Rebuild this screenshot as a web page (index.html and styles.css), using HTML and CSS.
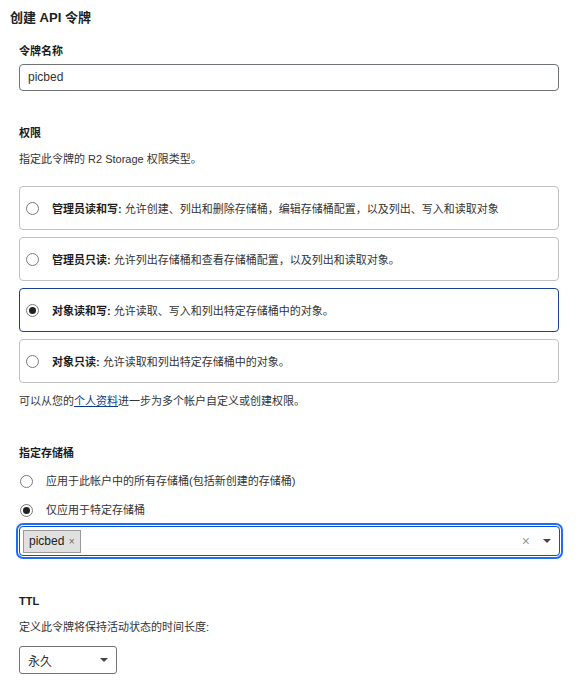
FILE: index.html
```html
<!DOCTYPE html>
<html lang="zh-CN">
<head>
    <meta charset="UTF-8">
    <title>创建 API 令牌</title>
    <link rel="stylesheet" href="styles.css">
</head>
<body>
    <div class="page">
        <h1>创建 API 令牌</h1>

        <div class="section">
            <div class="field-label">令牌名称</div>
            <div class="text-input">picbed</div>

            <div class="section-title">权限</div>
            <div class="section-desc">指定此令牌的 R2 Storage 权限类型。</div>

            <div class="cards">
                <div class="card">
                    <span class="radio"></span>
                    <span><b>管理员读和写:</b> 允许创建、列出和删除存储桶，编辑存储桶配置，以及列出、写入和读取对象</span>
                </div>
                <div class="card">
                    <span class="radio"></span>
                    <span><b>管理员只读:</b> 允许列出存储桶和查看存储桶配置，以及列出和读取对象。</span>
                </div>
                <div class="card selected">
                    <span class="radio checked"></span>
                    <span><b>对象读和写:</b> 允许读取、写入和列出特定存储桶中的对象。</span>
                </div>
                <div class="card">
                    <span class="radio"></span>
                    <span><b>对象只读:</b> 允许读取和列出特定存储桶中的对象。</span>
                </div>
            </div>

            <div class="note">可以从您的<a href="#">个人资料</a>进一步为多个帐户自定义或创建权限。</div>

            <div class="section-title bucket-title">指定存储桶</div>
            <div class="option first">
                <span class="radio"></span>
                <span>应用于此帐户中的所有存储桶(包括新创建的存储桶)</span>
            </div>
            <div class="option">
                <span class="radio checked"></span>
                <span>仅应用于特定存储桶</span>
            </div>

            <div class="tag-input">
                <span class="tag">picbed <span class="tag-x">×</span></span>
                <span class="clear">×</span>
                <span class="caret"></span>
            </div>

            <div class="section-title ttl-title">TTL</div>
            <div class="section-desc">定义此令牌将保持活动状态的时间长度:</div>
            <div class="select">
                <span>永久</span>
                <span class="caret"></span>
            </div>
        </div>
    </div>
</body>
</html>
```

FILE: styles.css
```css
body {
    margin: 0;
    font-family: "Liberation Sans", "Noto Sans CJK SC", sans-serif;
    font-size: 11px;
    color: #1d1d1d;
    background-color: #fff;
}

.page {
    padding-top: 9px;
}

h1 {
    margin: 0;
    padding-left: 10px;
    font-size: 13px;
    line-height: 18px;
    font-weight: bold;
    color: #222;
}

.section {
    padding: 0 21px 0 19px;
}

.field-label {
    margin-top: 16px;
    font-weight: bold;
    line-height: 16px;
}

.text-input {
    margin-top: 5px;
    height: 27px;
    box-sizing: border-box;
    border: 1px solid #6f7377;
    border-radius: 4px;
    padding: 0 8px;
    font-size: 12px;
    line-height: 25px;
    color: #333;
}

.section-title {
    margin-top: 34px;
    font-weight: bold;
    line-height: 16px;
}

.section-desc {
    margin-top: 10px;
    line-height: 16px;
    color: #333;
}

.cards {
    display: flex;
    flex-direction: column;
    gap: 7px;
    margin-top: 19px;
}

.card {
    display: flex;
    align-items: center;
    gap: 13px;
    height: 44px;
    box-sizing: border-box;
    padding-left: 6px;
    border: 1px solid #c2c2c2;
    border-radius: 4px;
    color: #333;
}

.card b {
    color: #1d1d1d;
}

.card.selected {
    border-color: #1b3f8f;
}

.radio {
    position: relative;
    flex: none;
    width: 13px;
    height: 13px;
    box-sizing: border-box;
    border: 1px solid #7a7a7a;
    border-radius: 50%;
    background-color: #fff;
}

.radio.checked::after {
    content: "";
    position: absolute;
    left: 2px;
    top: 2px;
    width: 7px;
    height: 7px;
    border-radius: 50%;
    background-color: #222;
}

.note {
    margin-top: 10px;
    line-height: 16px;
    color: #333;
}

.note a {
    color: #0b3b87;
    text-decoration: underline;
}

.bucket-title {
    margin-top: 36px;
}

.option {
    display: flex;
    align-items: center;
    gap: 13px;
    margin-top: 13px;
    padding-left: 1px;
    line-height: 16px;
    color: #333;
}

.option.first {
    margin-top: 12px;
}

.tag-input {
    display: flex;
    align-items: center;
    margin: 8px -1px 0 0;
    height: 30px;
    box-sizing: border-box;
    padding: 0 8px 0 3px;
    border: 1px solid #0a4fd8;
    border-radius: 4px;
    box-shadow: 0 0 0 1px #fff, 0 0 0 3px #1f6bff;
}

.tag {
    height: 23px;
    box-sizing: border-box;
    padding: 0 5px;
    border: 1px solid #9a9a9a;
    background-color: #e0e0e0;
    font-size: 12px;
    line-height: 21px;
    color: #222;
}

.tag-x {
    font-size: 10px;
    color: #666;
    margin-left: 1px;
}

.clear {
    margin-left: auto;
    font-size: 14px;
    color: #9a9a9a;
}

.caret {
    width: 0;
    height: 0;
    border-left: 4px solid transparent;
    border-right: 4px solid transparent;
    border-top: 4px solid #444;
}

.tag-input .caret {
    margin-left: 13px;
}

.ttl-title {
    margin-top: 37px;
}

.select {
    display: flex;
    align-items: center;
    justify-content: space-between;
    margin-top: 11px;
    width: 98px;
    height: 28px;
    box-sizing: border-box;
    padding: 0 8px 0 8px;
    border: 1px solid #6f7377;
    border-radius: 3px;
    font-size: 12px;
    color: #333;
}
```
